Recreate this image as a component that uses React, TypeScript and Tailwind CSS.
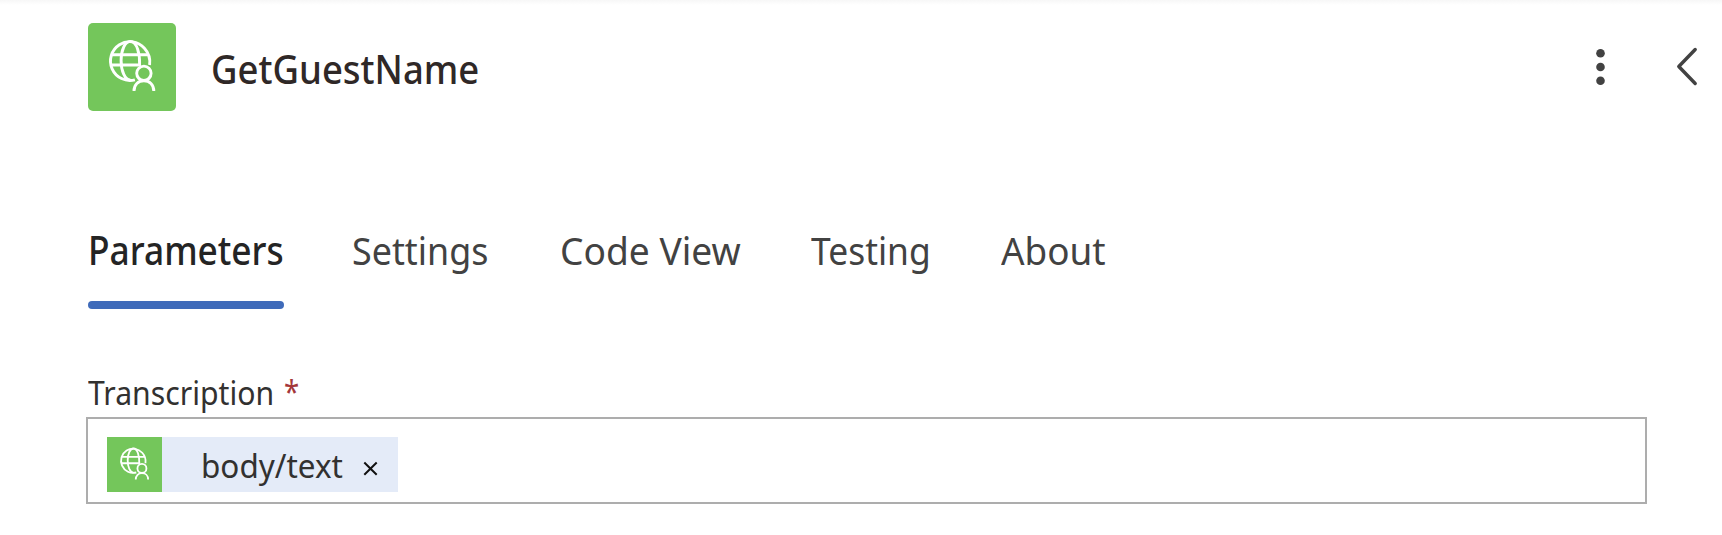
import React from 'react';

function GlobeUserIcon({ className }: { className: string }) {
  return (
    <svg viewBox="0 0 88 88" fill="none" stroke="white" strokeWidth="2.900" className={className}>
      <path d="M61.600 42C62.400 36 60.600 29.800 56.400 25.200A19.400 19.400 0 1 0 46.900 56.800" />
      <path d="M23.500 31.700H60.500M23.500 42H53" />
      <path d="M51.600 42C52 31 48.900 18.400 42.400 18.400C36.900 18.400 33.100 27 33.100 37.500C33.100 48 36.900 57 42.400 57" />
      <circle cx="55.900" cy="50.300" r="7.200" />
      <path d="M46 68C46 61.500 50.300 57.800 55.900 57.800S65.800 61.500 65.800 68" />
    </svg>
  );
}

const tabs = [
  { name: 'Settings', box: 'w-[208px]', fit: 'scale-x-[0.919]' },
  { name: 'Code View', box: 'w-[251px]', fit: 'scale-x-[0.953]' },
  { name: 'Testing', box: 'w-[190px]', fit: 'scale-x-[0.908]' },
  { name: 'About', box: 'w-[120px]', fit: 'scale-x-[0.945]' },
];

export default function App() {
  return (
    <main className="h-[535px] w-[1722px] overflow-hidden bg-white font-['Noto_Sans','Open_Sans',sans-serif] text-[#323130]">
      <div className="h-[5px] bg-gradient-to-b from-[#f7f7f7] to-white" />
      <header className="flex h-[106px] items-start pt-[18px] pl-[88px]">
        <div className="size-[88px] shrink-0 rounded-[5px] bg-[#74c65b]">
          <GlobeUserIcon className="size-full" />
        </div>
        <h1 className="ml-[35px] mt-[19px] w-[1379px] text-[39px] leading-[54px] font-medium whitespace-nowrap text-[#2f2827]">
          <span className="inline-block origin-left scale-x-[0.936]">GetGuestName</span>
        </h1>
        <button aria-label="More" className="mt-[21px] shrink-0">
          <svg width="20" height="46" viewBox="0 0 20 46" fill="#424242">
            <circle cx="10.500" cy="9.300" r="4.300" />
            <circle cx="10.500" cy="23" r="4.300" />
            <circle cx="10.500" cy="36.700" r="4.300" />
          </svg>
        </button>
        <button aria-label="Collapse" className="ml-[66px] mt-[21px] shrink-0">
          <svg width="24" height="46" viewBox="0 0 24 46" fill="none" stroke="#424242" strokeWidth="3.400" strokeLinecap="round" strokeLinejoin="round">
            <path d="M19.200 5.500L2.800 22.500L19.200 39.500" />
          </svg>
        </button>
      </header>

      <nav className="mt-[112px] flex h-[86px] pl-[88px] text-[39px] leading-[54px] whitespace-nowrap text-[#424242]">
        <div className="flex w-[264px] flex-col">
          <span className="w-[196px] font-medium text-[#242424]">
            <span className="inline-block origin-left scale-x-[0.905]">Parameters</span>
          </span>
          <span className="mt-[24px] h-2 w-[196px] rounded-full bg-[#3f6bba]" />
        </div>
        {tabs.map((tab) => (
          <span key={tab.name} className={tab.box}>
            <span className={`inline-block origin-left ${tab.fit}`}>{tab.name}</span>
          </span>
        ))}
      </nav>

      <section className="mt-[62px] pl-[86px]">
        <label className="flex h-[46px] pl-[2px] text-[32.500px] leading-[44px] whitespace-nowrap">
          <span className="w-[196px]">
            <span className="inline-block origin-left scale-x-[0.929]">Transcription</span>
          </span>
          <span className="-mt-px inline-block origin-left scale-x-[0.85] text-[#a4373a]">*</span>
        </label>
        <div className="h-[87px] w-[1561px] border-2 border-[#adadad] pt-[18px] pl-[19px]">
          <div className="flex h-[55px] w-[291px] bg-[#e4ebf8]">
            <div className="size-[55px] shrink-0 bg-[#74c65b]">
              <GlobeUserIcon className="size-full" />
            </div>
            <span className="ml-[39px] mt-[7px] w-[162px] shrink-0 text-[32.500px] leading-[44px] whitespace-nowrap">
              <span className="inline-block origin-left scale-x-[0.968]">body/text</span>
            </span>
            <svg className="mt-[24px] shrink-0" width="16" height="16" viewBox="0 0 16 16" stroke="#111" strokeWidth="2">
              <path d="M1.300 1.500L13.700 13.800M13.700 1.500L1.300 13.800" />
            </svg>
          </div>
        </div>
      </section>
    </main>
  );
}
